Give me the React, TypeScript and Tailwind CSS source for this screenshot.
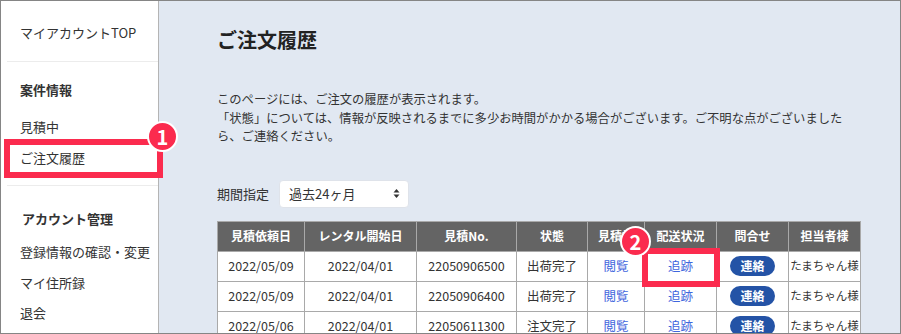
import React from "react";

const rows = [
    {req: "2022/05/09", start: "2022/04/01", no: "22050906500", status: "出荷完了"},
    {req: "2022/05/09", start: "2022/04/01", no: "22050906400", status: "出荷完了"},
    {req: "2022/05/06", start: "2022/04/01", no: "22050611300", status: "注文完了"},
];

const headers = ["見積依頼日", "レンタル開始日", "見積No.", "状態", "見積書", "配送状況", "問合せ", "担当者様"];

const Badge = ({n, className}: {n: string; className: string}) => (
    <div
        className={`absolute flex h-[31px] w-[31px] items-center justify-center rounded-full border-[2.5px] border-white bg-[#fb2b4e] text-[20px] font-bold leading-none text-white ${className}`}
    >
        {n}
    </div>
);

const SideItem = ({children, className = ""}: {children: React.ReactNode; className?: string}) => (
    <div className={`h-[20px] pl-[19px] text-[13px] leading-[20px] text-[#333] ${className}`}>{children}</div>
);

const cell = "flex h-[30px] items-center justify-center whitespace-nowrap border-b border-r border-[#a9a9a9] bg-white";

export default function App() {
    return (
        <div className="relative flex h-[334px] w-[901px] overflow-hidden border border-[#858585] font-['Noto_Sans_CJK_JP','Noto_Sans',sans-serif]">
            {/* sidebar */}
            <aside className="w-[158px] shrink-0 border-r border-[#b4b4b4] bg-white pt-[22px]">
                <SideItem>マイアカウントTOP</SideItem>
                <div className="ml-[6px] mt-[18px] h-px bg-[#ececec]" />
                <SideItem className="mt-[18px] font-bold">案件情報</SideItem>
                <SideItem className="mt-[17px]">見積中</SideItem>
                <SideItem className="mt-[11px]">ご注文履歴</SideItem>
                <div className="ml-[6px] mt-[17px] h-px bg-[#ececec]" />
                <SideItem className="mt-[23px] pl-[21px] font-bold">アカウント管理</SideItem>
                <SideItem className="mt-[13px]">登録情報の確認・変更</SideItem>
                <SideItem className="mt-[11px]">マイ住所録</SideItem>
                <SideItem className="mt-[10px]">退会</SideItem>
            </aside>

            {/* main */}
            <main className="flex-1 bg-[#e1e8f2] pl-[58px] pt-[25px]">
                <h1 className="text-[20px] font-bold leading-[28px] text-[#222]">ご注文履歴</h1>
                <p className="mt-[36px] w-[632px] text-[12.3px] leading-[18.5px] text-[#333]">
                    このページには、ご注文の履歴が表示されます。
                    <br />
                    「状態」については、情報が反映されるまでに多少お時間がかかる場合がございます。ご不明な点がございましたら、ご連絡ください。
                </p>

                <div className="mt-[34px] flex items-center">
                    <span className="w-[62px] text-[13px] text-[#333]">期間指定</span>
                    <div className="flex h-[28px] w-[130px] items-center justify-between rounded-[4px] border border-[#dfe3ea] bg-white pl-[9px] pr-[8px] text-[13px] text-[#333]">
                        <span>過去24ヶ月</span>
                        <svg width="7" height="9" viewBox="0 0 7 9">
                            <path d="M3.5 0 L6.5 3.5 H0.5 Z" fill="#333" />
                            <path d="M3.5 9 L6.5 5.5 H0.5 Z" fill="#333" />
                        </svg>
                    </div>
                </div>

                <div className="mt-[13px] grid w-[644px] grid-cols-[87px_112px_100px_71px_57px_72px_72px_72px] border-l border-t border-[#a9a9a9] text-[12.5px]">
                    {headers.map((h) => (
                        <div
                            key={h}
                            className="flex h-[30px] items-center justify-center whitespace-nowrap border-b border-r border-[#a9a9a9] bg-[#646464] text-[12px] font-bold text-white"
                        >
                            {h}
                        </div>
                    ))}
                    {rows.map((r, i) => (
                        <React.Fragment key={i}>
                            <div className={`${cell} text-[#333]`}>{r.req}</div>
                            <div className={`${cell} text-[#333]`}>{r.start}</div>
                            <div className={`${cell} text-[#333]`}>{r.no}</div>
                            <div className={`${cell} text-[#333]`}>{r.status}</div>
                            <div className={`${cell} text-[#3f66dd]`}>閲覧</div>
                            <div className={`${cell} text-[#3f66dd]`}>追跡</div>
                            <div className={cell}>
                                <span className="flex h-[20px] w-[45px] items-center justify-center rounded-full bg-[#2453a6] text-[12px] font-bold text-white">
                                    連絡
                                </span>
                            </div>
                            <div className={`${cell} text-[11.5px] text-[#333]`}>たまちゃん様</div>
                        </React.Fragment>
                    ))}
                </div>
            </main>

            {/* callouts */}
            <div className="absolute left-[3px] top-[138px] h-[39px] w-[159px] border-[6px] border-[#fb2b4e]" />
            <Badge n="1" className="left-[146px] top-[120px]" />
            <div className="absolute left-[641px] top-[247px] h-[39px] w-[78px] border-[6px] border-[#fb2b4e]" />
            <Badge n="2" className="left-[619px] top-[225px]" />
        </div>
    );
}
